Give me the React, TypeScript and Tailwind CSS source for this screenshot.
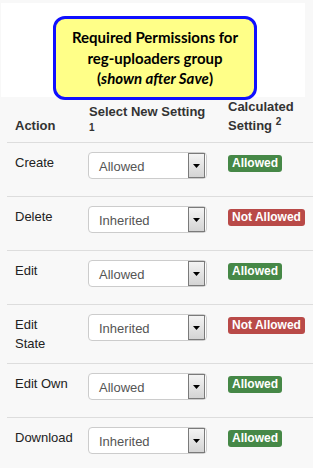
import React from 'react';

const rows = [
  { action: 'Create', setting: 'Allowed', result: true },
  { action: 'Delete', setting: 'Inherited', result: false },
  { action: 'Edit', setting: 'Allowed', result: true },
  { action: 'Edit State', setting: 'Inherited', result: false },
  { action: 'Edit Own', setting: 'Allowed', result: true },
  { action: 'Download', setting: 'Inherited', result: true },
];

function FakeSelect({ value }: { value: string }) {
  return (
    <div className="flex h-[27px] w-[119px] items-center justify-between rounded-[4px] border border-[#cccccc] bg-white pl-[10px] pr-[1px]">
      <span className="pt-[3px] text-[13px] text-[#555555]">{value}</span>
      <div className="flex h-[25px] w-[17px] items-center justify-center border border-[#7a7a7a] bg-gradient-to-b from-[#f4f4f4] to-[#d4d4d4]">
        <svg width="7" height="4" viewBox="0 0 7 4">
          <path d="M0 0h7L3.5 4z" fill="#000" />
        </svg>
      </div>
    </div>
  );
}

export default function App() {
  return (
    <div className="relative h-[468px] w-[313px] overflow-hidden bg-[#f8f8f8] font-['Liberation_Sans',Arial,sans-serif] text-[13px] text-[#333333]">
      <div className="ml-[1px] mt-[3px] h-[94px] w-[304px] bg-white" />

      {/* callout */}
      <div className="absolute left-[53px] top-[16px] flex h-[84px] w-[204px] flex-col items-center justify-center rounded-[12px] border-[3px] border-[#1010ff] bg-[#ffff88] font-['Lato',sans-serif] text-[15px] font-bold leading-[20.5px] text-black">
        <div>Required Permissions for</div>
        <div>reg-uploaders group</div>
        <div>
          (<i>shown after Save</i>)
        </div>
      </div>

      <div className="ml-[7px]">
        <div className="grid grid-cols-[73px_140px_1fr] items-end border-b border-[#dddddd] pb-[7px] font-bold leading-[19px]">
          <div className="pl-[8px]">Action</div>
          <div className="pl-[9px]">
            Select New Setting
            <div className="text-[10px] leading-[14px]">1</div>
          </div>
          <div className="pl-[8px]">
            Calculated
            <br />
            Setting <sup className="text-[10px]">2</sup>
          </div>
        </div>

        {rows.map((r) => (
          <div
            key={r.action}
            className={`grid grid-cols-[73px_140px_1fr] items-start border-b border-[#dddddd] pt-[8px] ${
              r.action === 'Edit State' ? 'h-[59px]' : 'h-[54px]'
            }`}
          >
            <div className="w-[63px] pl-[8px] pt-[2px] leading-[19px] text-[#222222]">{r.action}</div>
            <div className="pl-[8px] pt-[1px]">
              <FakeSelect value={r.setting} />
            </div>
            <div className="pl-[8px] pt-[2px]">
              <span
                className={`inline-block rounded-[3px] px-[4px] text-[12px] font-bold leading-[17px] text-white ${
                  r.result ? 'bg-[#468847]' : 'bg-[#b94a48]'
                }`}
              >
                {r.result ? 'Allowed' : 'Not Allowed'}
              </span>
            </div>
          </div>
        ))}
      </div>
    </div>
  );
}
